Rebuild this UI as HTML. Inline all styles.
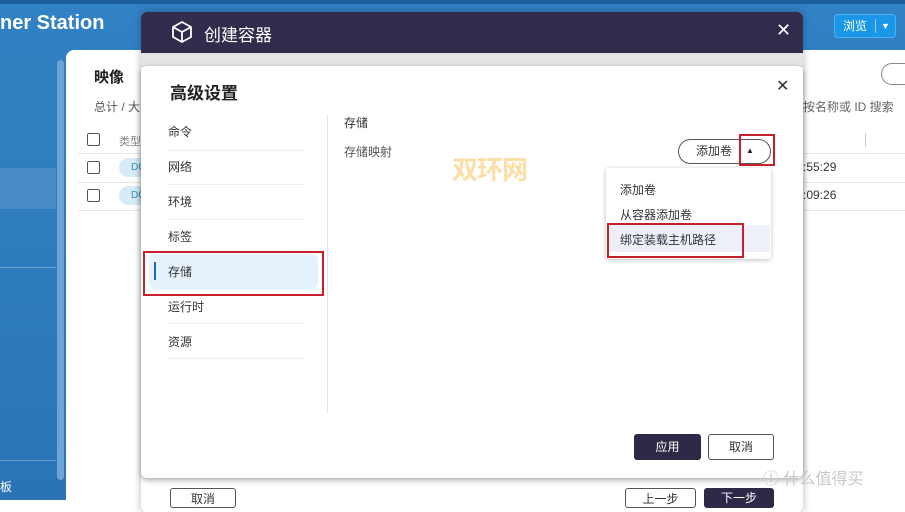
<!DOCTYPE html>
<html><head><meta charset="utf-8"><style>
*{margin:0;padding:0;box-sizing:border-box}
body{width:905px;height:500px;overflow:hidden;position:relative;background:#fff;font-family:"Liberation Sans","Noto Sans CJK SC",sans-serif;color:#333}
.a{position:absolute}
</style></head><body>
<div class="a" style="left:0;top:0;width:905px;height:500px;background:linear-gradient(180deg,#3182c4,#2a74b6)"></div>
<div class="a" style="left:0;top:0;width:905px;height:4px;background:#1c5f9c"></div>
<div class="a" style="left:0;top:12px;font-size:20px;font-weight:bold;color:#fff">ner Station</div>
<div class="a" style="left:0;top:168px;width:56px;height:41px;background:rgba(255,255,255,0.12)"></div>
<div class="a" style="left:0;top:267px;width:56px;height:1px;background:rgba(255,255,255,0.3)"></div>
<div class="a" style="left:0;top:460px;width:56px;height:1px;background:rgba(255,255,255,0.3)"></div>
<div class="a" style="left:0;top:478px;font-size:12px;color:#fff">板</div>
<div class="a" style="left:57px;top:60px;width:7px;height:420px;border-radius:4px;background:#6ba5d6"></div>
<div class="a" style="left:66px;top:50px;width:839px;height:450px;background:#fff;border-radius:8px 0 0 0"></div>
<div class="a" style="left:834px;top:14px;width:62px;height:24px;border-radius:4px;background:#1a97e8;border:1px solid #4db0f0;color:#fff;font-size:12px;line-height:22px;padding-left:8px">浏览<span style="position:absolute;left:40px;top:4px;width:1px;height:14px;background:#8fd0f8"></span><span style="position:absolute;left:46px;top:0;font-size:9px">▼</span></div>
<div class="a" style="left:94px;top:66px;font-size:15px;font-weight:bold;color:#222">映像</div>
<div class="a" style="left:94px;top:98px;font-size:12px;color:#555">总计 / 大</div>
<div class="a" style="left:881px;top:63px;width:40px;height:22px;border:1px solid #888;border-radius:12px"></div>
<div class="a" style="left:803px;top:98px;font-size:12px;color:#666">按名称或 ID 搜索</div>
<div class="a" style="left:78px;top:153px;width:827px;height:1px;background:#e6e6e6"></div>
<div class="a" style="left:78px;top:182px;width:827px;height:1px;background:#e6e6e6"></div>
<div class="a" style="left:78px;top:210px;width:827px;height:1px;background:#e6e6e6"></div>
<div class="a" style="left:865px;top:133px;width:1px;height:14px;background:#ccc"></div>
<div class="a" style="left:87px;top:133px;width:13px;height:13px;border:1.5px solid #555;border-radius:2px"></div>
<div class="a" style="left:87px;top:161px;width:13px;height:13px;border:1.5px solid #555;border-radius:2px"></div>
<div class="a" style="left:87px;top:189px;width:13px;height:13px;border:1.5px solid #555;border-radius:2px"></div>
<div class="a" style="left:119px;top:133px;font-size:11px;color:#888">类型</div>
<div class="a" style="left:119px;top:158px;width:30px;height:19px;border-radius:10px;background:#d5ebf6;color:#3a8fc0;font-size:10px;line-height:19px;padding-left:12px">DO</div>
<div class="a" style="left:119px;top:186px;width:30px;height:19px;border-radius:10px;background:#d5ebf6;color:#3a8fc0;font-size:10px;line-height:19px;padding-left:12px">DO</div>
<div class="a" style="left:803px;top:160px;font-size:12px;color:#333">:55:29</div>
<div class="a" style="left:803px;top:188px;font-size:12px;color:#333">:09:26</div>
<!-- back dialog -->
<div class="a" style="left:141px;top:12px;width:662px;height:500px;background:#fff;border-radius:6px;box-shadow:0 0 8px rgba(0,0,0,.3)"></div>
<div class="a" style="left:141px;top:12px;width:662px;height:41px;background:#312c4b;border-radius:6px 6px 0 0"></div>
<svg class="a" style="left:170px;top:20px" width="24" height="24" viewBox="0 0 24 24" fill="none" stroke="#fff" stroke-width="1.8" stroke-linejoin="round"><path d="M12 2 21 7v10l-9 5-9-5V7z M3 7l9 5 9-5 M12 12v10"/></svg>
<div class="a" style="left:204px;top:21px;font-size:17px;color:#fff">创建容器</div>
<div class="a" style="left:776px;top:20px;font-size:18px;color:#fff">✕</div>
<div class="a" style="left:141px;top:53px;width:662px;height:14px;background:#e4e4e6"></div>
<div class="a" style="left:170px;top:488px;width:66px;height:20px;border:1px solid #555;border-radius:3px;font-size:12px;text-align:center;line-height:20px">取消</div>
<div class="a" style="left:625px;top:488px;width:71px;height:20px;border:1px solid #555;border-radius:3px;font-size:12px;text-align:center;line-height:20px">上一步</div>
<div class="a" style="left:704px;top:488px;width:70px;height:20px;background:#2d2946;color:#fff;border-radius:3px;font-size:12px;text-align:center;line-height:20px">下一步</div>
<!-- front dialog -->
<div class="a" style="left:141px;top:66px;width:662px;height:412px;background:#fff;border-radius:6px;box-shadow:0 2px 6px rgba(0,0,0,.35)"></div>
<div class="a" style="left:170px;top:79px;font-size:17px;font-weight:bold;color:#222">高级设置</div>
<div class="a" style="left:776px;top:76px;font-size:16px;color:#333">✕</div>
<div class="a" style="left:327px;top:114px;width:1px;height:300px;background:#e3e3e3"></div>
<div class="a" style="left:168px;top:123px;font-size:12px">命令</div>
<div class="a" style="left:168px;top:150px;width:136px;height:1px;background:#eee"></div>
<div class="a" style="left:168px;top:158px;font-size:12px">网络</div>
<div class="a" style="left:168px;top:184px;width:136px;height:1px;background:#eee"></div>
<div class="a" style="left:168px;top:193px;font-size:12px">环境</div>
<div class="a" style="left:168px;top:219px;width:136px;height:1px;background:#eee"></div>
<div class="a" style="left:168px;top:228px;font-size:12px">标签</div>
<div class="a" style="left:149px;top:254px;width:169px;height:35px;background:#e5f2fb;border-radius:6px"></div>
<div class="a" style="left:154px;top:262px;width:2px;height:18px;background:#1e66b0"></div>
<div class="a" style="left:168px;top:263px;font-size:12px">存储</div>
<div class="a" style="left:143px;top:251px;width:181px;height:45px;border:2px solid #c8202a"></div>
<div class="a" style="left:168px;top:298px;font-size:12px">运行时</div>
<div class="a" style="left:168px;top:323px;width:136px;height:1px;background:#eee"></div>
<div class="a" style="left:168px;top:333px;font-size:12px">资源</div>
<div class="a" style="left:168px;top:358px;width:136px;height:1px;background:#eee"></div>
<div class="a" style="left:344px;top:114px;font-size:12px;color:#333">存储</div>
<div class="a" style="left:344px;top:143px;font-size:12px;color:#555">存储映射</div>
<div class="a" style="left:452px;top:150px;font-size:26px;font-weight:bold;color:#fbdfa6;letter-spacing:-1px">双环网</div>
<div class="a" style="left:678px;top:139px;width:93px;height:25px;border:1px solid #555;border-radius:13px;font-size:12px;line-height:23px;padding-left:17px">添加卷</div>
<div class="a" style="left:746px;top:146px;font-size:8px;color:#222">▲</div>
<div class="a" style="left:739px;top:134px;width:36px;height:32px;border:2px solid #c8202a"></div>
<div class="a" style="left:606px;top:168px;width:165px;height:91px;background:#fff;border-radius:3px;box-shadow:0 1px 5px rgba(0,0,0,.25)"></div>
<div class="a" style="left:620px;top:181px;font-size:12px">添加卷</div>
<div class="a" style="left:620px;top:206px;font-size:12px">从容器添加卷</div>
<div class="a" style="left:609px;top:225px;width:161px;height:27px;background:#edf0f8"></div>
<div class="a" style="left:620px;top:231px;font-size:12px">绑定装载主机路径</div>
<div class="a" style="left:607px;top:223px;width:137px;height:35px;border:2px solid #c8202a"></div>
<div class="a" style="left:634px;top:434px;width:67px;height:26px;background:#2d2946;color:#fff;border-radius:3px;font-size:12px;text-align:center;line-height:26px">应用</div>
<div class="a" style="left:708px;top:434px;width:66px;height:26px;border:1px solid #555;border-radius:3px;font-size:12px;text-align:center;line-height:24px">取消</div>
<div class="a" style="left:763px;top:465px;font-size:16px;color:#c8c8c8">Ⓘ 什么值得买</div>
</body></html>
